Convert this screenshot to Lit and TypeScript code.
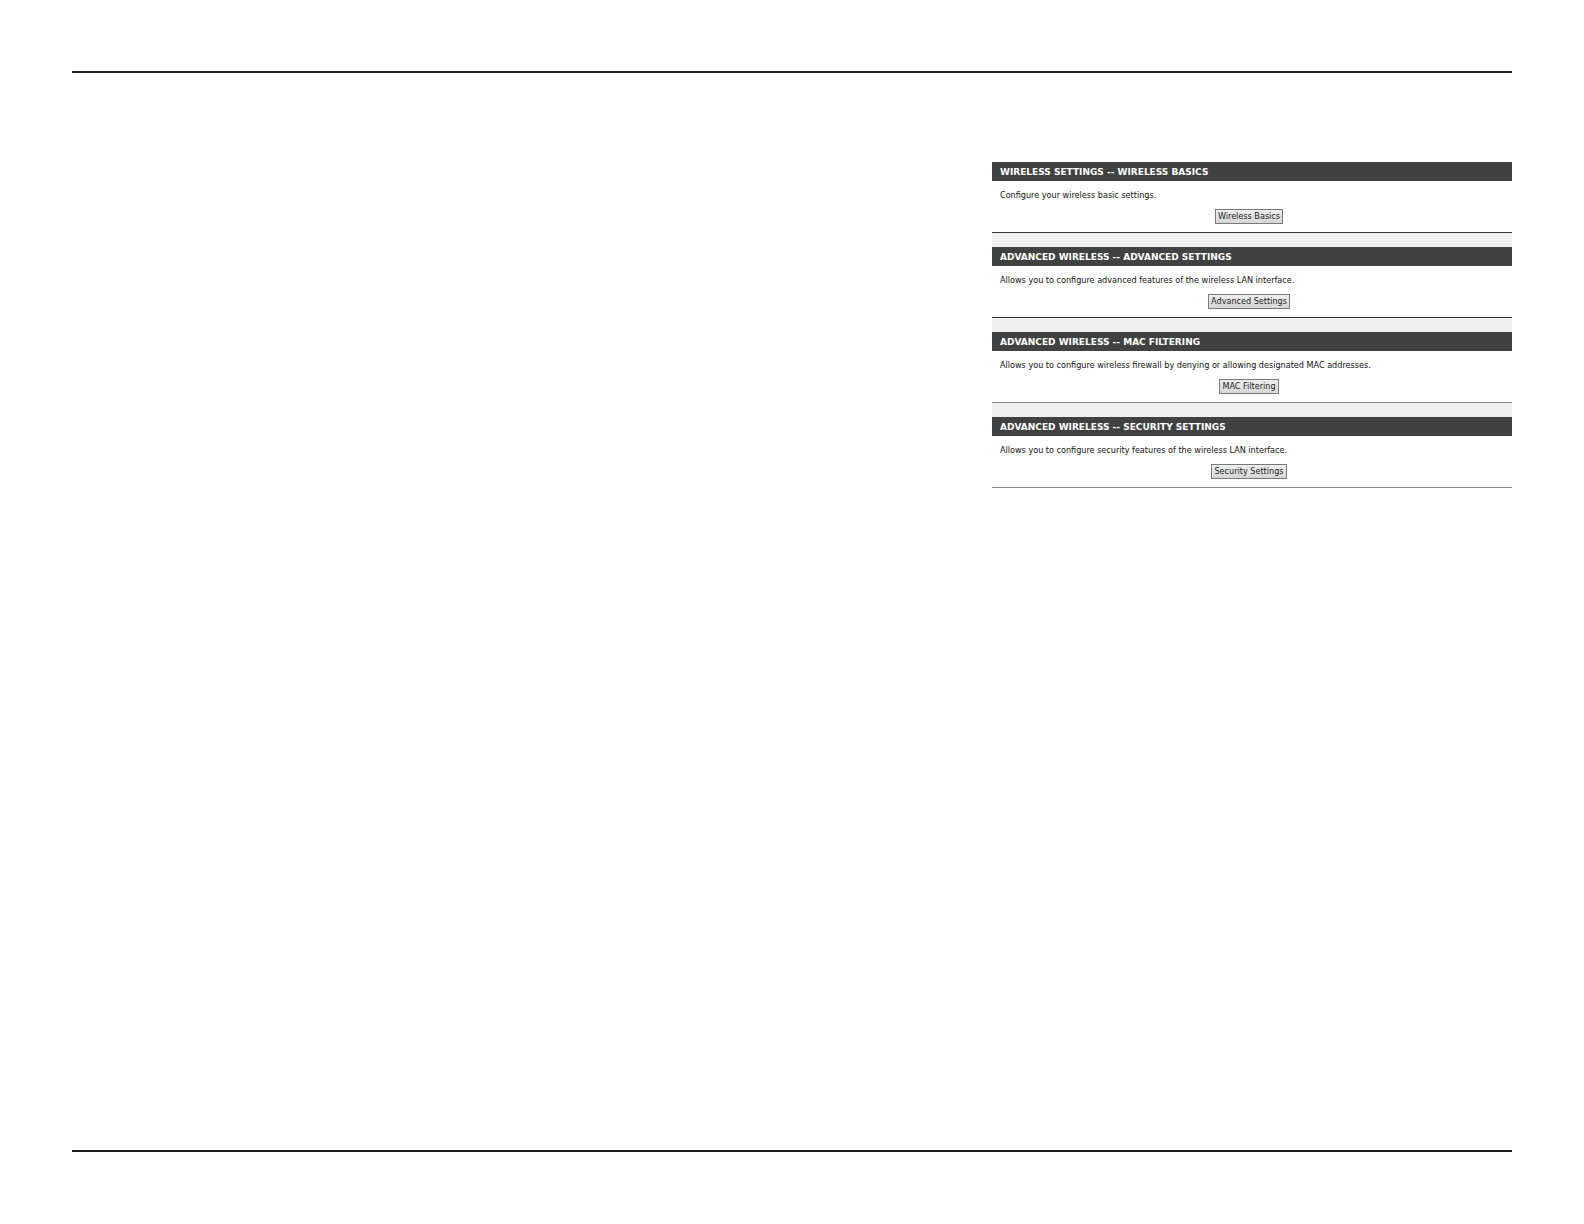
import { LitElement, html, css } from "lit";
import { customElement, property } from "lit/decorators.js";

@customElement("settings-panel")
class SettingsPanel extends LitElement {
  @property() heading = "";
  @property() description = "";
  @property() action = "";

  static styles = css`
    :host {
      display: block;
      background: #fff;
      border-bottom: 1px solid #343537;
    }
    .heading {
      margin: 0;
      padding: 2px 8px 0;
      background: #404241;
      color: #fff;
      font: bold 9px/17px "DejaVu Sans", sans-serif;
    }
    .body {
      padding: 8px 14px 8px 8px;
      display: flex;
      flex-direction: column;
      gap: 7px;
    }
    .description {
      margin: 0;
      color: #111;
      font: 9px/13px "DejaVu Sans Condensed", "DejaVu Sans", sans-serif;
    }
    .action {
      align-self: center;
      margin: 0;
      padding: 0 2px;
      border: 1px solid #77797b;
      border-radius: 0;
      background: linear-gradient(#eee, #d6d6d6);
      color: #222;
      font: 9px/13px "DejaVu Sans Condensed", "DejaVu Sans", sans-serif;
      cursor: pointer;
    }
  `;

  render() {
    return html`
      <h2 class="heading">${this.heading}</h2>
      <div class="body">
        <p class="description">${this.description}</p>
        <button class="action" type="button">${this.action}</button>
      </div>
    `;
  }
}

const PANELS = [
  {
    heading: "WIRELESS SETTINGS -- WIRELESS BASICS",
    description: "Configure your wireless basic settings.",
    action: "Wireless Basics",
  },
  {
    heading: "ADVANCED WIRELESS -- ADVANCED SETTINGS",
    description: "Allows you to configure advanced features of the wireless LAN interface.",
    action: "Advanced Settings",
  },
  {
    heading: "ADVANCED WIRELESS -- MAC FILTERING",
    description:
      "Allows you to configure wireless firewall by denying or allowing designated MAC addresses.",
    action: "MAC Filtering",
  },
  {
    heading: "ADVANCED WIRELESS -- SECURITY SETTINGS",
    description: "Allows you to configure security features of the wireless LAN interface.",
    action: "Security Settings",
  },
];

@customElement("app-root")
class AppRoot extends LitElement {
  static styles = css`
    :host {
      display: flex;
      box-sizing: border-box;
      min-height: 100vh;
      padding: 71px 72px 72px;
      background: #fff;
    }
    .page {
      flex: 1;
      display: grid;
      grid-template-columns: 23fr 13fr;
      align-items: start;
      border: solid #1f1c1f;
      border-width: 2px 0;
      padding-top: 89px;
    }
    .panels {
      grid-column: 2;
      display: flex;
      flex-direction: column;
      gap: 14px;
      background: #f0f0f0;
    }
    .panel:nth-child(n + 3) {
      border-bottom-color: #8a8b8c;
    }
  `;

  render() {
    return html`
      <main class="page">
        <div class="panels">
          ${PANELS.map(
            (p) => html`<settings-panel
              class="panel"
              .heading=${p.heading}
              .description=${p.description}
              .action=${p.action}
            ></settings-panel>`,
          )}
        </div>
      </main>
    `;
  }
}
